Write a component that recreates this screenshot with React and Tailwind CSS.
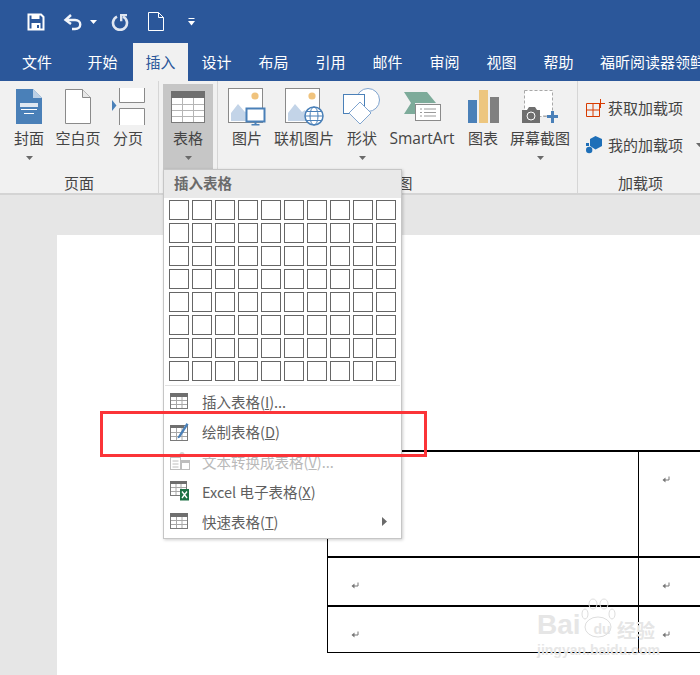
import React from 'react';

const tabs = [
  { label: '文件', w: 'w-[74px]' },
  { label: '开始', w: 'w-[57px] mr-[2px]' },
  { label: '插入', w: 'w-[55px]', active: true },
  { label: '设计', w: 'w-[57px]' },
  { label: '布局', w: 'w-[57px]' },
  { label: '引用', w: 'w-[57px]' },
  { label: '邮件', w: 'w-[57px]' },
  { label: '审阅', w: 'w-[57px]' },
  { label: '视图', w: 'w-[57px]' },
  { label: '帮助', w: 'w-[57px]' },
];

const Caret = ({ className = '' }) => (
  <svg width="7" height="4" viewBox="0 0 7 4" className={className}>
    <path d="M0 0h7L3.5 4z" fill="#6a6a6a" />
  </svg>
);

const SaveIcon = () => (
  <svg width="18" height="18" viewBox="0 0 18 18">
    <path d="M1.5 1.5h12.5l2.5 2.5v12.5h-15z" fill="none" stroke="#fff" strokeWidth="2" />
    <rect x="4.5" y="2" width="8" height="4" fill="#fff" />
    <rect x="4.5" y="10" width="9" height="6" fill="#fff" />
    <rect x="10" y="12" width="2" height="3" fill="#2b579a" />
  </svg>
);

const UndoIcon = () => (
  <svg width="20" height="18" viewBox="0 0 20 18">
    <path d="M8 2L2.5 7 8 11" fill="none" stroke="#f2f5fa" strokeWidth="2.4" />
    <path d="M3 7h9c7 0 7 9 0 9H9" fill="none" stroke="#f2f5fa" strokeWidth="2.4" />
  </svg>
);

const RedoIcon = () => (
  <svg width="18" height="18" viewBox="0 0 18 18">
    <path d="M6 3.6a7 7 0 1 0 6 0" fill="none" stroke="#dfe6f1" strokeWidth="2.6" />
    <path d="M9 1h7v2.2h-4.6v5H9z" fill="#dfe6f1" />
  </svg>
);

const NewDocIcon = () => (
  <svg width="16" height="19" viewBox="0 0 16 19">
    <path d="M.5.5h10l5 5v13H.5z" fill="#2b579a" stroke="#fff" />
    <path d="M10.5.5v5h5" fill="none" stroke="#fff" />
  </svg>
);

const CustomizeIcon = () => (
  <svg width="7" height="8" viewBox="0 0 7 8">
    <rect x="0.5" width="6" height="1" fill="#fff" />
    <path d="M0 3h7L3.5 7.5z" fill="#fff" />
  </svg>
);

const CoverIcon = () => (
  <svg width="26" height="35" viewBox="0 0 26 35">
    <path d="M0 0h17l9 9v26H0z" fill="#4a80b8" />
    <path d="M17 0l9 9h-9z" fill="#bcd0e6" />
    <rect x="4" y="14" width="18" height="4" fill="#dfe8f2" />
    <rect x="5" y="20" width="16" height="1" fill="#fff" />
    <rect x="8" y="24" width="10" height="1" fill="#fff" />
  </svg>
);

const BlankPageIcon = () => (
  <svg width="26" height="35" viewBox="0 0 26 35">
    <path d="M.5.5h17l8 8v26H.5z" fill="#fff" stroke="#8a8a8a" />
    <path d="M17.5.5v8h8" fill="#e8e8e8" stroke="#8a8a8a" />
  </svg>
);

const BreakIcon = () => (
  <svg width="33" height="37" viewBox="0 0 33 37">
    <path d="M7.5 0v14.5h25V0" fill="#fff" stroke="#8a8a8a" />
    <path d="M7.5 37V20.5h25V37" fill="#fff" stroke="#8a8a8a" />
    <path d="M0 12l4.500 5.500L0 23z" fill="#4a80b8" />
  </svg>
);

const TableIcon = () => (
  <svg width="34" height="32" viewBox="0 0 34 32">
    <rect x="0.500" y="0.500" width="33" height="31" fill="#fff" stroke="#7a7a7a" />
    <rect x="0" y="0" width="34" height="7" fill="#6f6f6f" />
    <path d="M1 13.500h32M1 19.500h32M1 25.500h32M11.500 7v24M22.500 7v24" stroke="#b5b5b5" />
  </svg>
);

const Mountain = () => (
  <>
    <rect x="0.500" y="0.500" width="34" height="34" fill="#fff" stroke="#8a8a8a" />
    <path d="M3 33V25l7-9 7 8 3-2 6 11z" fill="#c3d4e8" />
    <circle cx="27" cy="8" r="3.600" fill="#f0c37d" />
  </>
);

const PictureIcon = () => (
  <svg width="38" height="38" viewBox="0 0 38 38">
    <Mountain />
    <rect x="18.500" y="20.500" width="18" height="13" fill="#fff" stroke="#4a80b8" strokeWidth="2" />
    <rect x="26.500" y="34" width="2" height="3" fill="#4a80b8" />
    <rect x="23.500" y="36" width="8" height="1.500" fill="#4a80b8" />
  </svg>
);

const OnlinePictureIcon = () => (
  <svg width="39" height="38" viewBox="0 0 39 38">
    <Mountain />
    <circle cx="29" cy="28" r="9" fill="#fff" stroke="#4a80b8" strokeWidth="1.500" />
    <ellipse cx="29" cy="28" rx="4" ry="9" fill="none" stroke="#4a80b8" />
    <path d="M20 28h18M21.500 23.500h15M21.500 32.500h15" stroke="#4a80b8" />
  </svg>
);

const ShapesIcon = () => (
  <svg width="38" height="38" viewBox="0 0 38 38">
    <circle cx="25" cy="12" r="11.500" fill="#fff" stroke="#7fa4cf" />
    <rect x="0.500" y="6.500" width="21" height="19" fill="#fff" stroke="#4a80b8" />
    <path d="M17 14l11 11-11 11L6 25z" fill="#fff" stroke="#7fa4cf" />
  </svg>
);

const SmartArtIcon = () => (
  <svg width="37" height="30" viewBox="0 0 37 30">
    <path d="M0 0h23l9 11H11v11H0l7-11z" fill="#7dab9a" />
    <rect x="11.500" y="12.500" width="25" height="16" fill="#fff" stroke="#8a8a8a" />
    <path d="M16 17h2M20 17h12M16 20.500h2M20 20.500h12M16 24h2M20 24h12" stroke="#9a9a9a" />
  </svg>
);

const ChartIcon = () => (
  <svg width="31" height="33" viewBox="0 0 31 33">
    <rect x="0" y="10" width="9" height="23" fill="#4a80b8" />
    <rect x="11" y="0" width="9" height="33" fill="#edc67f" />
    <rect x="22" y="7" width="9" height="26" fill="#808080" />
  </svg>
);

const ScreenshotIcon = () => (
  <svg width="36" height="34" viewBox="0 0 36 34">
    <rect x="2.500" y="0.500" width="28" height="26" fill="#fff" stroke="#a8a8a8" strokeDasharray="3 2" />
    <path d="M0 20h5l2-3h6l2 3h3v13H0z" fill="#6f6f6f" />
    <circle cx="9" cy="26" r="4" fill="#6f6f6f" stroke="#fff" />
    <path d="M21 26h4" stroke="#a8a8a8" />
    <path d="M25 25h4v-4h3v4h4v3h-4v5h-3v-5h-4z" fill="#4a80b8" />
  </svg>
);

const GetAddinIcon = () => (
  <svg width="20" height="18" viewBox="0 0 20 18">
    <path d="M.500 4.500h13v13H.500zM.500 11h13M7 4.500v13" fill="none" stroke="#d83b01" />
    <path d="M14.500 0v9M10 4.500h9" stroke="#d83b01" />
  </svg>
);

const MyAddinIcon = () => (
  <svg width="17" height="18" viewBox="0 0 17 18">
    <path d="M9.500 0l6.500 3v7l-6.500 3.500L4 10V3z" fill="#1e6fb8" />
    <circle cx="3.200" cy="14" r="3.200" fill="#1e6fb8" />
    <rect x="0" y="7" width="3" height="3" fill="#1e6fb8" />
  </svg>
);

const MenuTable = () => (
  <svg width="18" height="16" viewBox="0 0 18 16">
    <rect x="0.500" y="0.500" width="17" height="15" fill="#fff" stroke="#7a7a7a" />
    <rect width="18" height="4" fill="#6f6f6f" />
    <path d="M1 7.500h16M1 11.500h16M6.500 4v11M12 4v11" stroke="#a8a8a8" />
  </svg>
);

const MenuDraw = () => (
  <svg width="19" height="19" viewBox="0 0 19 19">
    <rect x="0.500" y="3.500" width="17" height="15" fill="#fff" stroke="#7a7a7a" />
    <rect y="3" width="14" height="3" fill="#6f6f6f" />
    <path d="M1 10.500h16M1 14.500h16M6.500 6v12M12 6v12" stroke="#a8a8a8" />
    <path d="M8 14.500L16.500 1l2 1.500L10 15.500l-2.500 1z" fill="#4a80b8" />
  </svg>
);

const MenuConvert = () => (
  <svg width="20" height="18" viewBox="0 0 20 18" opacity="0.55">
    <rect x="0.500" y="5.500" width="10" height="12" fill="#fff" stroke="#8a8a8a" />
    <path d="M2.500 9h6M2.500 12h6M2.500 15h6" stroke="#8a8a8a" />
    <rect x="11.500" y="8.500" width="8" height="9" fill="#fff" stroke="#8a8a8a" />
    <rect x="11" y="8" width="9" height="3" fill="#8a8a8a" />
    <circle cx="12" cy="2.500" r="2.500" fill="#b0b0b0" />
  </svg>
);

const MenuExcel = () => (
  <svg width="20" height="20" viewBox="0 0 20 20">
    <rect x="0.500" y="0.500" width="16" height="14" fill="#fff" stroke="#7a7a7a" />
    <rect width="17" height="3" fill="#6f6f6f" />
    <path d="M1 6.500h15M1 10.500h15M6 3v11M11 3v11" stroke="#a8a8a8" />
    <rect x="10" y="8" width="9" height="11.500" fill="#1e7145" />
    <path d="M12 10.500l5 6.500M17 10.500l-5 6.500" stroke="#fff" strokeWidth="1.300" />
  </svg>
);

const ReturnMark = () => (
  <svg width="8" height="8" viewBox="0 0 8 8" className="block">
    <path d="M7 .5v3.500H1.500" fill="none" stroke="#777" />
    <path d="M3.500 1.500L0.500 4l3 2.500z" fill="#777" />
  </svg>
);

const RibbonButton = ({ width, icon, label, caret, active, latin }) => (
  <div className={`${width} ${active ? 'bg-[#c6c6c6] h-[85px]' : ''} shrink-0 flex flex-col items-center`}>
    <div className="h-[45px] flex items-center justify-center">{icon}</div>
    <div
      className={`h-[18px] leading-[18px] whitespace-nowrap text-[#444] ${latin ? 'text-[15.5px]' : 'text-[15px]'}`}
      style={latin ? { fontFamily: '"Open Sans", sans-serif' } : undefined}
    >
      {label}
    </div>
    {caret && <Caret className="mt-[9px]" />}
  </div>
);

const Group = ({ width, label, children }) => (
  <div className={`${width} shrink-0 h-full flex flex-col border-r border-[#d6d6d6]`}>
    <div className="flex-1 flex pt-[3px]">{children}</div>
    <div className="h-[20px] leading-[20px] text-center text-[15px] text-[#444]">{label}</div>
  </div>
);

const MenuItem = ({ icon, children, disabled, arrow }) => (
  <div className={`h-[30px] flex items-center ${disabled ? 'text-[#b9b9b9]' : 'text-[#5f5f5f]'}`}>
    <div className="w-[38px] pl-[6px] flex items-center">{icon}</div>
    <span className="mt-[2px] text-[14.5px] whitespace-nowrap">{children}</span>
    {arrow && (
      <svg width="5" height="9" viewBox="0 0 5 9" className="ml-auto mr-[14px]">
        <path d="M0 0l5 4.500L0 9z" fill="#6a6a6a" />
      </svg>
    )}
  </div>
);

const Row = ({ height, border, left, right }) => (
  <div className={`${height} ${border} border-l border-black flex`}>
    <div className="w-[311px] shrink-0 border-r border-black pl-[23px] pt-[24px]">{left}</div>
    <div className="flex-1 pl-[23px] pt-[24px]">{right}</div>
  </div>
);

export default function App() {
  return (
    <div
      className="relative w-[700px] h-[675px] overflow-hidden bg-[#e6e6e6]"
      style={{ fontFamily: '"Noto Sans CJK SC", "Liberation Sans", sans-serif' }}
    >
      <div className="bg-[#2b579a]">
        <div className="h-[43px] flex items-center pl-[27px]">
          <SaveIcon />
          <div className="ml-[18px]"><UndoIcon /></div>
          <svg width="7" height="4" viewBox="0 0 7 4" className="ml-[7px]"><path d="M0 0h7L3.500 4z" fill="#fff" /></svg>
          <div className="ml-[14px]"><RedoIcon /></div>
          <div className="ml-[19px]"><NewDocIcon /></div>
          <div className="ml-[24px]"><CustomizeIcon /></div>
        </div>
        <div className="h-[38px] flex text-[15px] text-white overflow-hidden">
          {tabs.map((t) => (
            <div
              key={t.label}
              className={`${t.w} shrink-0 flex items-center justify-center ${t.active ? 'bg-[#f1f1f1] text-[#2b579a]' : ''}`}
            >
              {t.label}
            </div>
          ))}
          <div className="pl-[13px] flex items-center whitespace-nowrap">福昕阅读器领鲜</div>
        </div>
      </div>

      <div className="h-[114px] bg-[#f1f1f1] border-b-2 border-[#d4d4d4] flex">
        <Group width="w-[159px]" label="页面">
          <RibbonButton width="w-[58px]" icon={<CoverIcon />} label="封面" caret />
          <RibbonButton width="w-[40px]" icon={<BlankPageIcon />} label="空白页" />
          <RibbonButton width="w-[60px]" icon={<BreakIcon />} label="分页" />
        </Group>
        <Group width="w-[59px]" label="">
          <div className="pl-[4px]">
            <RibbonButton width="w-[50px]" icon={<TableIcon />} label="表格" caret active />
          </div>
        </Group>
        <Group width="w-[360px]" label="插图">
          <RibbonButton width="w-[58px]" icon={<PictureIcon />} label="图片" />
          <RibbonButton width="w-[56px]" icon={<OnlinePictureIcon />} label="联机图片" />
          <RibbonButton width="w-[60px]" icon={<ShapesIcon />} label="形状" caret />
          <RibbonButton width="w-[60px]" icon={<SmartArtIcon />} label="SmartArt" latin />
          <RibbonButton width="w-[62px]" icon={<ChartIcon />} label="图表" />
          <RibbonButton width="w-[52px]" icon={<ScreenshotIcon />} label="屏幕截图" caret />
        </Group>
        <div className="flex-1 h-full flex flex-col">
          <div className="flex-1 flex flex-col pl-[8px] pt-[17px] gap-[17px] text-[15px] text-[#444]">
            <div className="h-[20px] flex items-center gap-[2px] whitespace-nowrap"><GetAddinIcon />获取加载项</div>
            <div className="h-[20px] flex items-center gap-[5px] whitespace-nowrap">
              <MyAddinIcon />我的加载项<Caret className="ml-[8px]" />
            </div>
          </div>
          <div className="h-[20px] leading-[20px] text-center text-[15px] text-[#444]">加载项</div>
        </div>
      </div>

      <div className="ml-[57px] mt-[40px] h-[440px] bg-white pt-[215px] pl-[270px]">
        <Row height="h-[106px]" border="border-t-2" right={<ReturnMark />} />
        <Row height="h-[49px]" border="border-t-2" left={<ReturnMark />} right={<ReturnMark />} />
        <Row height="h-[48px]" border="border-t-2 border-b" left={<ReturnMark />} right={<ReturnMark />} />
      </div>

      {/* dropdown */}
      <div className="absolute left-[163px] top-[169px] w-[239px] h-[370px] bg-white border border-[#c6c6c6] shadow-[1px_1px_3px_rgba(0,0,0,0.2)]">
        <div className="h-[28px] pb-[2px] bg-[#e9e9e9] flex items-center pl-[10px] text-[14.5px] font-bold text-[#6b6b6b]">插入表格</div>
        <div className="grid grid-cols-[repeat(10,20px)] auto-rows-[20px] gap-[3px] pl-[5px] pt-[2px]">
          {Array.from({ length: 80 }).map((_, i) => (
            <div key={i} className="border border-[#666] bg-white" />
          ))}
        </div>
        <div className="h-px bg-[#e2e2e2] mt-[4px] mx-[1px]" />
        <div>
          <MenuItem icon={<MenuTable />}>插入表格(<u>I</u>)...</MenuItem>
          <MenuItem icon={<MenuDraw />}>绘制表格(<u>D</u>)</MenuItem>
          <MenuItem icon={<MenuConvert />} disabled>文本转换成表格(<u>V</u>)...</MenuItem>
          <MenuItem icon={<MenuExcel />}>Excel 电子表格(<u>X</u>)</MenuItem>
          <MenuItem icon={<MenuTable />} arrow>快速表格(<u>T</u>)</MenuItem>
        </div>
      </div>

      {/* red highlight */}
      <div className="absolute left-[100px] top-[411px] w-[327px] h-[46px] border-[3px] border-[#fb3438]" />

      {/* watermark */}
      <div className="absolute left-[537px] top-[598px] w-[163px] pointer-events-none text-[#e6e6e6]" style={{ fontFamily: '"Liberation Sans", sans-serif' }}>
        <svg width="36" height="42" viewBox="0 0 36 42" className="absolute left-[43px] top-0">
          <g fill="none" stroke="#dedede">
            <ellipse cx="13" cy="6" rx="4" ry="5" />
            <ellipse cx="24" cy="6" rx="4" ry="5" />
            <ellipse cx="5" cy="16" rx="3" ry="5" />
            <ellipse cx="32" cy="16" rx="3" ry="5" />
            <ellipse cx="18" cy="29" rx="13" ry="10" />
          </g>
        </svg>
        <div className="flex items-end h-[41px] font-bold leading-none">
          <span className="w-[50px] text-[28px]">Bai</span>
          <span className="w-[30px] pb-[3px] text-center text-[14px]">du</span>
          <span className="text-[19px]" style={{ fontFamily: '"Noto Sans CJK SC", sans-serif' }}>经验</span>
        </div>
        <div className="mt-[4px] text-[14px] font-bold leading-[15px] whitespace-nowrap">jingyan.baidu.com</div>
      </div>
    </div>
  );
}
